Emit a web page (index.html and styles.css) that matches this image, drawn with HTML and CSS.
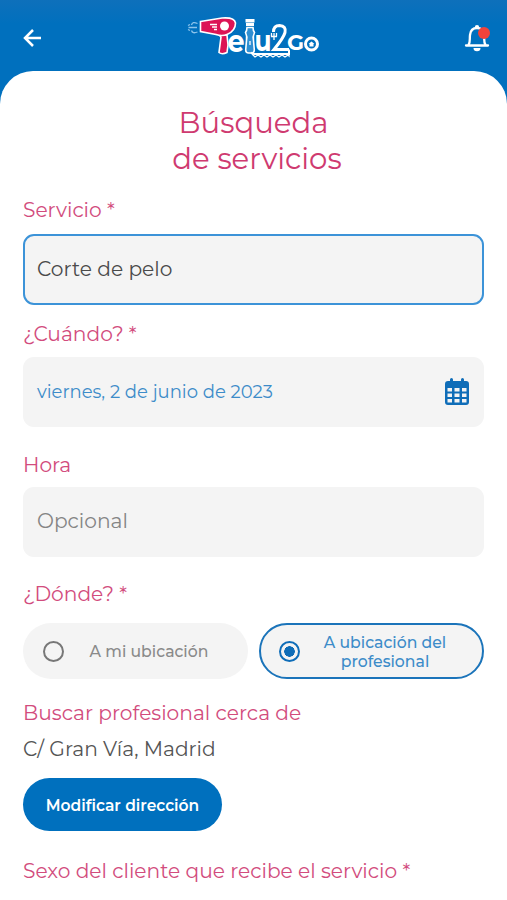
FILE: index.html
```html
<!DOCTYPE html>
<html lang="es">

<head>
    <meta charset="UTF-8">
    <meta name="viewport" content="width=device-width, initial-scale=1.0">
    <title>Pelu2Go - Búsqueda de servicios</title>
    <link rel="stylesheet" href="styles.css">
</head>

<body>
    <!-- Top bar -->
    <header class="topbar">
        <button class="icon-btn" aria-label="Volver">
            <svg class="back-icon" width="20" height="20" viewBox="0 0 20 20">
                <path d="M19 10H3.500M11 2L3 10L11 18" />
            </svg>
        </button>

        <svg class="logo" width="150" height="60" viewBox="0 0 150 60" role="img" aria-label="Pelu2Go">
            <!-- air -->
            <path class="air" d="M17.500 15.500q-5-2.500-6 1.500M17 19.500H8.500M17.500 24q-5 2-6-1.500M10 16.500l-2 1M10 22.500l-2-1" />
            <!-- hair dryer -->
            <path class="dryer" d="M39 27L41 29L39 44.500Q42 47 47 44.500L48 37L47 27Z" />
            <path class="dryer" d="M20.500 13.500L42 10Q54.500 9 55.500 15Q55.500 23 47 26.500Q42 28.500 36 26.500L20.500 23.500Z" />
            <circle class="white" cx="44.500" cy="18" r="4.500" />
            <path class="line" d="M30 16.500h7M32 19h5M34 21.500h3" />
            <text class="logo-text" x="47.500" y="43.500" font-size="30" textLength="17" lengthAdjust="spacingAndGlyphs">e</text>
            <!-- bottle -->
            <path class="white" d="M65.500 11h9v3.500h-9zM66 15h8v3h-8z" />
            <path class="bottle" d="M67 19.500h6q0 3 1.500 5q-2 4-1 8l.8 9.500q0 3-3 3h-2.600q-3 0-3-3l.8-9.500q1-4-1-8Q67 22.500 67 19.500Z" />
            <path class="line" d="M70 33v4" />
            <text class="logo-text" x="74.500" y="43" font-size="29" textLength="17" lengthAdjust="spacingAndGlyphs">u</text>
            <!-- comb under the number -->
            <path class="comb-back" d="M71 44.500q2 2 5 1.500H109V41.500" />
            <path class="comb" d="M72 46l3 3 3-2 3 2 3-2 3 2 3-2 3 2 3-2 3 2 3-2 3 2 3-2 1 1V45" />
            <path class="two" d="M93.500 24Q93.500 17.500 99.500 17.500Q106.500 18 105 24.500Q103.500 30 94 41.500H109" />
            <path class="line" d="M91.500 25v3.500M94 25v3.500M96.500 25v3.500M91 28.500h6M94 28v4" />
            <text class="logo-text" x="107" y="42" font-size="21.500" textLength="17" lengthAdjust="spacingAndGlyphs">G</text>
            <circle class="ring" cx="131.500" cy="36" r="6" />
            <path class="white" d="M128.500 36l3-2.500 3 2.500h-1v2.500h-4v-2.500z" />
        </svg>

        <button class="icon-btn bell" aria-label="Notificaciones">
            <svg class="bell-icon" width="26" height="28" viewBox="0 0 26 28">
                <path d="M2 21.500H24M4.500 21C6.500 18 5.500 15 6 11C6.500 6.500 9 4 13 4C17 4 19.500 6.500 20 11C20.500 15 19.500 18 21.500 21" />
                <path class="bell-fill" d="M10.800 3.500a2.200 2.400 0 0 1 4.400 0zM9.500 24h7a3.500 3.200 0 0 1-7 0z" />
            </svg>
            <span class="badge"></span>
        </button>
    </header>

    <main class="sheet">
        <h1 class="title">Búsqueda<br><span class="title-second">de servicios</span></h1>

        <div class="group">
            <div class="label">Servicio *</div>
            <div class="field active">Corte de pelo</div>
        </div>

        <div class="group group-date">
            <div class="label">¿Cuándo? *</div>
            <div class="field">
                <span class="date">viernes, 2 de junio de 2023</span>
                <svg class="calendar" width="24" height="28" viewBox="0 0 24 28">
                    <path fill-rule="evenodd" d="M3 3h2V1.500a1.500 1.500 0 0 1 3 0V3h8V1.500a1.500 1.500 0 0 1 3 0V3h2a3 3 0 0 1 3 3v18a3 3 0 0 1-3 3H3a3 3 0 0 1-3-3V6a3 3 0 0 1 3-3zM2.500 10v3.500H7V10zM9.500 10v3.500h5V10zM17 10v3.500h4.500V10zM2.500 15.500V19H7v-3.500zM9.500 15.500V19h5v-3.500zM17 15.500V19h4.500v-3.500zM2.500 21v3.500H7V21zM9.500 21v3.500h5V21zM17 21v3.500h4.500V21z" />
                </svg>
            </div>
        </div>

        <div class="group group-time">
            <div class="label">Hora</div>
            <div class="field placeholder">Opcional</div>
        </div>

        <div class="group group-place">
            <div class="label">¿Dónde? *</div>
            <div class="options">
                <div class="option">
                    <span class="radio"></span>
                    <span class="option-text">A mi ubicación</span>
                </div>
                <div class="option selected">
                    <span class="radio"></span>
                    <span class="option-text">A ubicación del<br>profesional</span>
                </div>
            </div>
        </div>

        <div class="near">
            <div class="label">Buscar profesional cerca de</div>
            <div class="address">C/ Gran Vía, Madrid</div>
            <button class="primary-btn">Modificar dirección</button>
        </div>

        <div class="label sex-label">Sexo del cliente que recibe el servicio *</div>
    </main>
</body>

</html>
```

FILE: styles.css
```css
* {
    box-sizing: border-box;
}

body {
    margin: 0;
    height: 900px;
    overflow: hidden;
    font-family: Montserrat, "Open Sans", sans-serif;
    font-size: 20.200px;
    color: #4a4a4a;
    background: linear-gradient(#0e70bb, #0070be 24px);
}

.topbar {
    display: flex;
    justify-content: space-between;
    height: 71px;
    padding: 8px 14px 0 17px;
}

.icon-btn {
    position: relative;
    width: 30px;
    height: 60px;
    padding: 0;
    border: none;
    background: none;
}

.back-icon {
    display: block;
    margin: 0 auto;
    fill: none;
    stroke: white;
    stroke-width: 2.500;
}

.bell-icon {
    display: block;
    margin: -1px 0 0 1px;
    fill: none;
    stroke: white;
    stroke-width: 2.300;
    stroke-linecap: round;
}

.bell-icon .bell-fill {
    fill: white;
    stroke: none;
}

.badge {
    position: absolute;
    top: 19px;
    left: 15px;
    width: 12px;
    height: 12px;
    border-radius: 50%;
    background-color: #f0433a;
}

/* Logo */
.logo-text {
    font-weight: 700;
    fill: white;
}

.air, .line, .comb, .comb-back, .two, .ring, .bottle {
    fill: none;
    stroke: white;
    stroke-width: 1.300;
}

.air {
    stroke: #8cc4ec;
}

.bottle {
    fill: #2f8fd2;
    stroke-width: 1.600;
}

.two {
    stroke-width: 3;
}

.ring {
    stroke-width: 3;
}

.comb-back {
    stroke-width: 2;
}

.dryer {
    fill: #dc1455;
    stroke: white;
    stroke-width: 1.600;
}

.white {
    fill: white;
}

/* Form */
.sheet {
    height: 829px;
    padding: 34px 23px 0;
    border-radius: 33px 33px 0 0;
    background-color: white;
}

.title {
    margin: 0 0 21px;
    font-size: 29.200px;
    font-weight: 400;
    line-height: 36px;
    text-align: center;
    color: #cf3a70;
}

.title-second {
    margin-left: 7px;
}

.label {
    line-height: 24px;
    color: #d24c7d;
}

.field {
    display: flex;
    align-items: center;
    justify-content: space-between;
    height: 70px;
    margin-top: 12px;
    padding: 0 15px 2px 14px;
    border-radius: 11px;
    background-color: #f4f4f4;
}

.active {
    height: 71px;
    padding-left: 12px;
    padding-bottom: 3px;
    border: 2px solid #3c93d8;
}

.group-date {
    margin-top: 17px;
}

.group-date .field {
    margin-top: 11px;
}

.group-time {
    margin-top: 26px;
}

.group-time .field {
    margin-top: 10px;
    padding-bottom: 3px;
}

.group-place {
    margin-top: 25px;
}

.date {
    padding-top: 1px;
    font-size: 18px;
    color: #3d8cc9;
}

.calendar {
    margin-top: 2px;
    fill: #0f6db8;
}

.placeholder {
    color: #858585;
}

.options {
    display: flex;
    gap: 11px;
    margin-top: 17px;
}

.option {
    display: flex;
    align-items: center;
    flex: 1;
    height: 56px;
    padding: 0 20px;
    border-radius: 28px;
    background-color: #f4f4f4;
    font-size: 15.700px;
    font-weight: 500;
    line-height: 19px;
    color: #8a8a8a;
}

.radio {
    flex: none;
    width: 21px;
    height: 21px;
    border: 2px solid #777;
    border-radius: 50%;
}

.option-text {
    flex: 1;
    padding: 1px 0 0 6px;
    text-align: center;
}

.selected {
    padding: 0 18px;
    border: 2px solid #1b74ba;
    color: #3d8cc9;
}

.selected .radio {
    border-color: #0f6db8;
    background: radial-gradient(circle, #0f6db8 5px, transparent 5.500px);
}

.near {
    margin-top: 22px;
}

.address {
    margin-top: 12px;
    line-height: 24px;
    color: #555;
}

.primary-btn {
    display: block;
    width: 199px;
    height: 53px;
    margin-top: 17px;
    padding: 1px 0 0;
    border: none;
    border-radius: 27px;
    background-color: #0070be;
    font-family: inherit;
    font-size: 15.500px;
    font-weight: 600;
    color: white;
}

.sex-label {
    margin-top: 28px;
}
```
